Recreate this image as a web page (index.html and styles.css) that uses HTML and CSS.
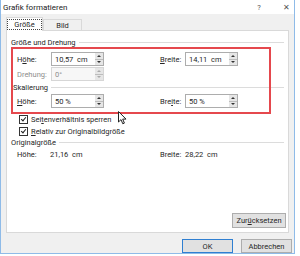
FILE: index.html
```html
<!DOCTYPE html>
<html lang="de">
<head>
  <meta charset="UTF-8">
  <title>Grafik formatieren</title>
  <link rel="stylesheet" href="styles.css">
</head>
<body>
  <div class="window">
    <div class="titlebar">
      <span class="title">Grafik formatieren</span>
      <span class="tb-btn help">?</span>
      <span class="tb-btn close">✕</span>
    </div>

    <div class="client">
      <div class="tabs">
        <div class="tab active"><span class="focus">Größe</span></div>
        <div class="tab">Bild</div>
      </div>

      <div class="panel">
        <!-- Größe und Drehung -->
        <div class="group-head"><span>Größe und Drehung</span><i></i></div>
        <div class="grid">
          <label class="lbl">H<u>ö</u>he:</label>
          <div class="field"><span>10,57 &nbsp;cm</span><b class="spin"></b></div>
          <label class="lbl right"><u>B</u>reite:</label>
          <div class="field"><span>14,11 &nbsp;cm</span><b class="spin"></b></div>

          <label class="lbl off">Drehung:</label>
          <div class="field off"><span>0°</span><b class="spin"></b></div>
        </div>

        <!-- Skalierung -->
        <div class="group-head second"><span>Skalierung</span><i></i></div>
        <div class="grid">
          <label class="lbl"><u>H</u>öhe:</label>
          <div class="field"><span>50 %</span><b class="spin"></b></div>
          <label class="lbl right">Bre<u>i</u>te:</label>
          <div class="field"><span>50 %</span><b class="spin"></b></div>
        </div>

        <div class="check first"><b class="box"></b>Sei<u>t</u>enverhältnis sperren</div>
        <div class="check"><b class="box"></b><u>R</u>elativ zur Originalbildgröße</div>

        <!-- Originalgröße -->
        <div class="group-head third"><span>Originalgröße</span><i></i></div>
        <div class="info">
          <span class="lbl">Höhe:</span><span>21,16 &nbsp;cm</span>
          <span class="lbl right">Breite:</span><span>28,22 &nbsp;cm</span>
        </div>

        <div class="panel-foot">
          <button class="btn">Zur<u>ü</u>cksetzen</button>
        </div>

        <!-- annotation frame and mouse pointer -->
        <div class="highlight"></div>
        <svg class="cursor" width="9" height="14" viewBox="0 0 9 14">
          <path d="M0.5 0.5 L0.5 11 L3 8.6 L4.8 12.8 L6.4 12.1 L4.7 8.1 L8 8.1 Z" fill="#fff" stroke="#222" stroke-width="1"/>
        </svg>
      </div>

      <div class="footer">
        <button class="btn default">OK</button>
        <button class="btn">Abbrechen</button>
      </div>
    </div>
  </div>
</body>
</html>
```

FILE: styles.css
```css
body {
  margin: 0;
  background: #fff;
  font-family: Roboto, "Noto Sans", sans-serif;
  font-size: 7.5px;
  color: #262626;
}

u {
  text-decoration-thickness: 1px;
  text-underline-offset: 1px;
}

.window {
  width: 293px;
  height: 253px;
  border: 1px solid #8fbbe8;
  border-top: none;
  background: #f0f0f0;
  display: flex;
  flex-direction: column;
}

.titlebar {
  height: 15px;
  background: #fff;
  display: flex;
  align-items: center;
  padding-left: 2px;
}

.title {
  flex: 1;
  font-size: 8px;
  color: #222;
}

.tb-btn {
  color: #555;
  font-size: 7.5px;
  text-align: center;
}

.help {
  width: 10px;
  margin-right: 17px;
}

.close {
  width: 10px;
  margin-right: 3px;
}

.client {
  flex: 1;
  display: flex;
  flex-direction: column;
  padding: 3px 0 0 5px;
}

.tabs {
  display: flex;
  height: 13px;
  align-items: flex-end;
  position: relative;
  z-index: 1;
}

.tab {
  height: 10px;
  width: 37px;
  border: 1px solid #d9d9d9;
  border-bottom: none;
  background: #f0f0f0;
  display: flex;
  align-items: center;
  justify-content: center;
  margin-left: -1px;
}

.tab.active {
  height: 13px;
  width: 35px;
  margin-left: 0;
  margin-right: 1px;
  background: #fff;
  margin-bottom: -1px;
}

.focus {
  border: 1px dotted #444;
  padding: 0 6px;
  line-height: 9px;
}

.panel {
  width: 283px;
  height: 203px;
  border: 1px solid #d9d9d9;
  background: #fff;
  padding: 0 4px 0 4px;
  box-sizing: border-box;
  display: flex;
  flex-direction: column;
  position: relative;
}

.group-head {
  display: flex;
  align-items: center;
  height: 10px;
  margin-top: 6px;
}

.group-head span {
  padding-right: 3px;
}

.group-head i {
  flex: 1;
  border-top: 1px solid #dcdcdc;
  margin-top: 1px;
}

.group-head.second {
  margin-top: 1px;
  margin-left: 2px;
}

.group-head.third {
  margin-top: 1px;
}

.grid {
  display: grid;
  grid-template-columns: 34px 53px 56px 25px 53px;
  grid-auto-rows: 14px;
  row-gap: 1px;
  margin-top: 5px;
  margin-left: 6px;
  align-items: center;
}

.group-head.second + .grid {
  margin-top: 2px;
}

.lbl.right {
  grid-column: 4;
}

.lbl.off {
  grid-column: 1;
  color: #8d8d8d;
}

.field {
  height: 14px;
  box-sizing: border-box;
  border: 1px solid #adadad;
  display: flex;
  align-items: center;
  padding-left: 3px;
  background: #fff;
}

.field span {
  flex: 1;
}

.field.off {
  border-color: #d6d6d6;
  background: #f7f7f7;
  color: #8d8d8d;
}

.spin {
  width: 8px;
  height: 12px;
  background:
    linear-gradient(#bdbdbd, #bdbdbd) center / 100% 1px no-repeat,
    #e6e6e6;
  position: relative;
}

.spin::before,
.spin::after {
  content: "";
  position: absolute;
  left: 2px;
  border-left: 2px solid transparent;
  border-right: 2px solid transparent;
}

.spin::before {
  top: 2px;
  border-bottom: 2px solid #333;
}

.spin::after {
  bottom: 2px;
  border-top: 2px solid #333;
}

.field.off .spin::before {
  border-bottom-color: #aaa;
}

.field.off .spin::after {
  border-top-color: #aaa;
}

.check {
  display: flex;
  align-items: center;
  height: 10px;
  margin-top: 2px;
  margin-left: 8px;
}

.check.first {
  margin-top: 6px;
}

.box {
  width: 7px;
  height: 7px;
  border: 1px solid #333;
  margin-right: 3px;
  position: relative;
}

.box::after {
  content: "";
  position: absolute;
  left: 2px;
  top: 0;
  width: 2px;
  height: 4px;
  border-right: 1px solid #222;
  border-bottom: 1px solid #222;
  transform: rotate(40deg);
}

.info {
  display: grid;
  grid-template-columns: 33px 110px 25px auto;
  margin-top: 2px;
  margin-left: 6px;
  height: 10px;
  align-items: center;
}

.info .lbl.right {
  grid-column: 3;
}

.panel-foot {
  margin-top: auto;
  margin-bottom: 4px;
  display: flex;
  justify-content: flex-end;
  margin-right: -2px;
}

.btn {
  font-family: inherit;
  font-size: 7.5px;
  color: #262626;
  height: 15px;
  width: 54px;
  padding: 0;
  background: #e1e1e1;
  border: 1px solid #adadad;
  border-radius: 0;
}

.footer {
  display: flex;
  justify-content: flex-end;
  gap: 8px;
  margin-top: 6px;
  padding-right: 2px;
}

.footer .btn {
  width: 51px;
  height: 14px;
}

.btn.default {
  border-color: #2f7fd1;
}

.highlight {
  position: absolute;
  left: 4px;
  top: 16px;
  width: 260px;
  height: 67px;
  border: 2px solid #e5484d;
  box-sizing: border-box;
}

.cursor {
  position: absolute;
  left: 111px;
  top: 80px;
}
```
